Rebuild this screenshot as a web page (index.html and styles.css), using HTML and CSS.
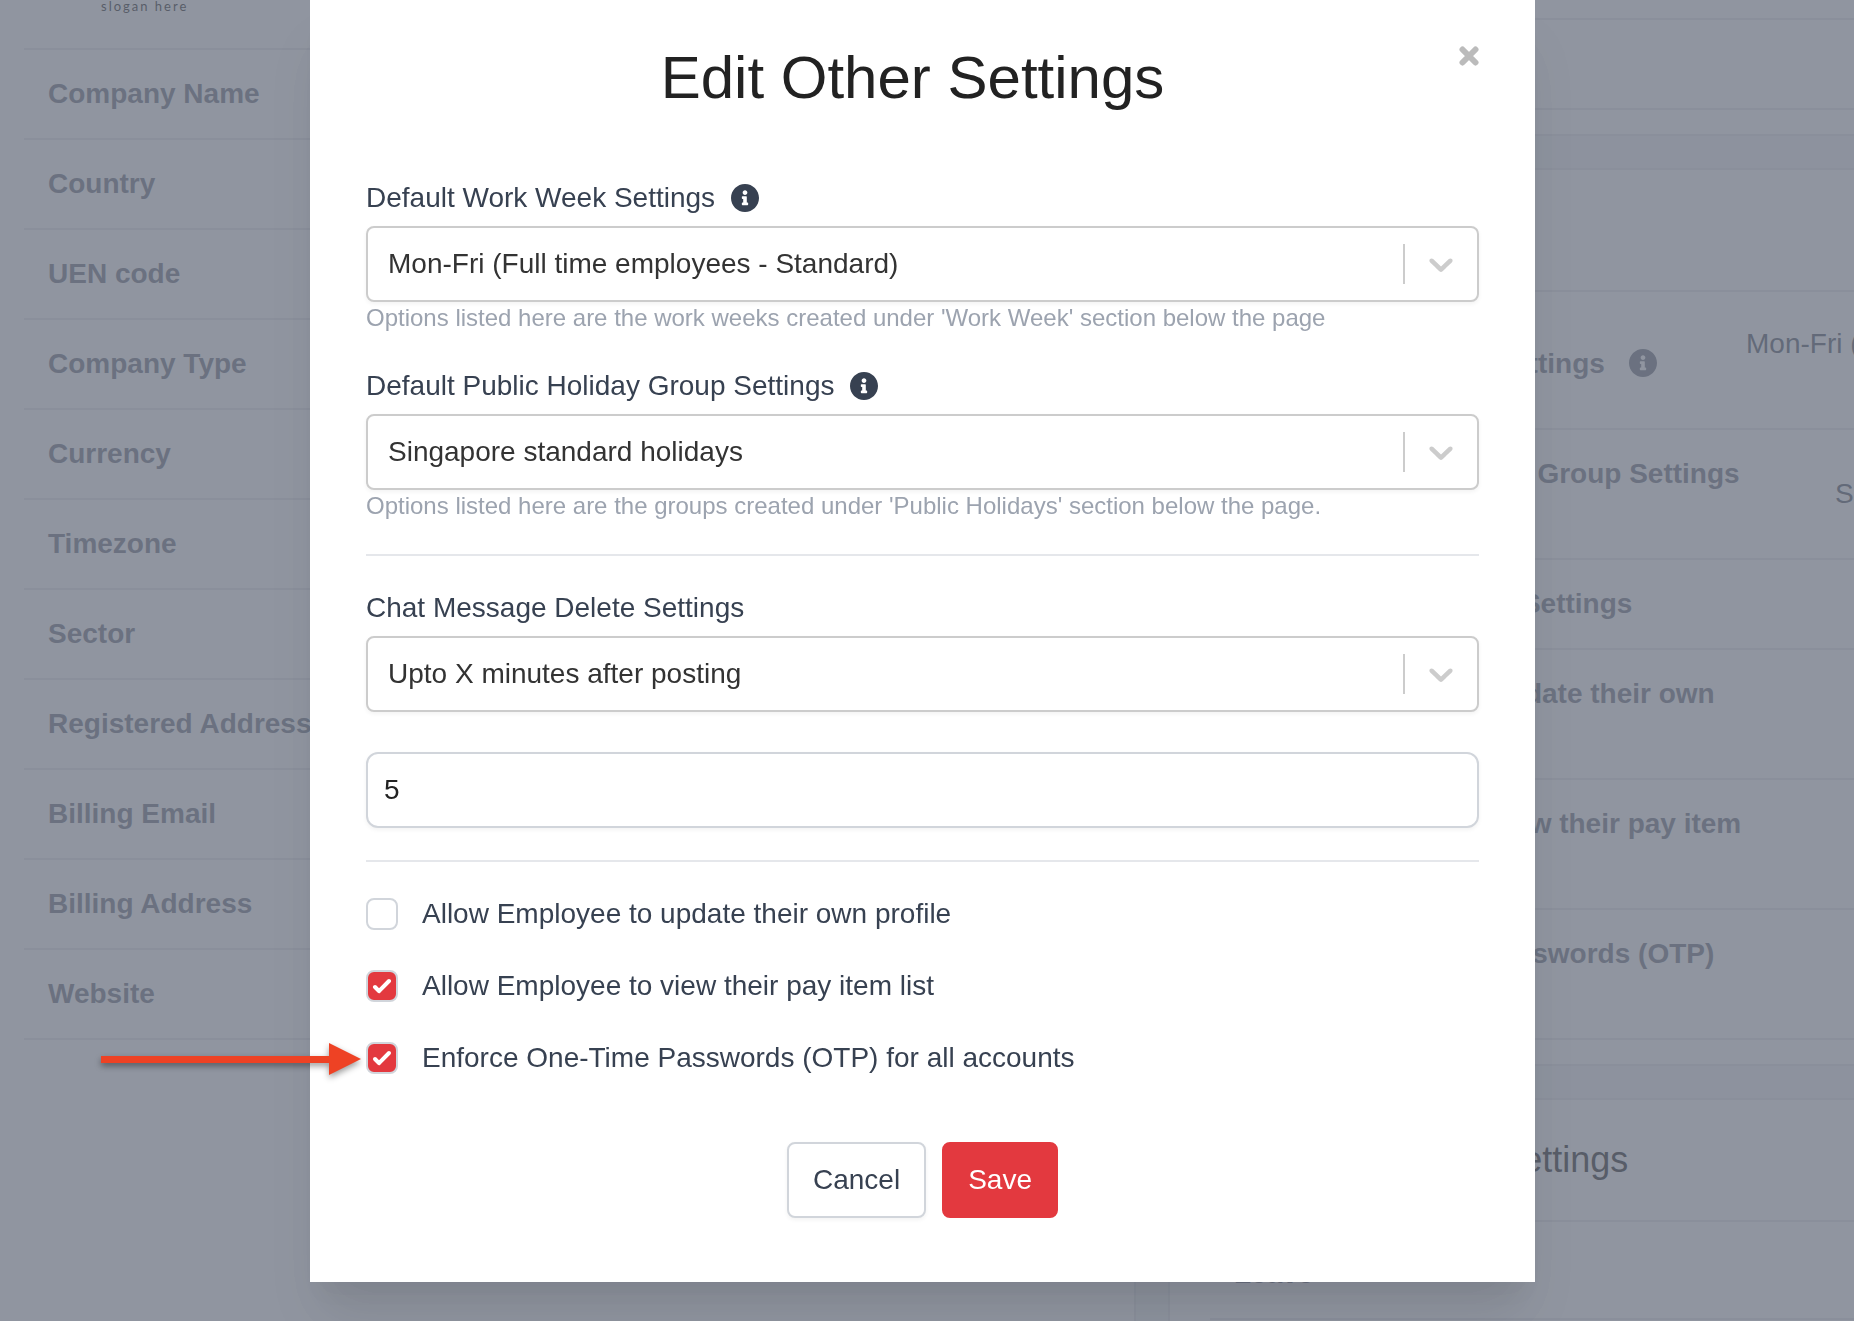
FILE: index.html
```html
<!DOCTYPE html>
<html lang="en">
<head>
    <meta charset="UTF-8">
    <meta name="viewport" content="width=device-width, initial-scale=1.0">
    <title>Edit Other Settings</title>
    <link rel="stylesheet" href="styles.css">
</head>
<body>

<!-- Shared icons -->
<svg class="sprite" aria-hidden="true">
    <symbol id="icon-info" viewBox="8 8 496 496">
        <path d="M256 8C119.043 8 8 119.083 8 256c0 136.997 111.043 248 248 248s248-111.003 248-248C504 119.083 392.957 8 256 8zm0 110c23.196 0 42 18.804 42 42s-18.804 42-42 42-42-18.804-42-42 18.804-42 42-42zm56 254c0 6.627-5.373 12-12 12h-88c-6.627 0-12-5.373-12-12v-24c0-6.627 5.373-12 12-12h12v-64h-12c-6.627 0-12-5.373-12-12v-24c0-6.627 5.373-12 12-12h64c6.627 0 12 5.373 12 12v100h12c6.627 0 12 5.373 12 12v24z"/>
    </symbol>
    <symbol id="icon-chevron" viewBox="0 0 20 20">
        <path d="M4.516 7.548c0.436-0.446 1.043-0.481 1.576 0l3.908 3.747 3.908-3.747c0.533-0.481 1.141-0.446 1.574 0 0.436 0.445 0.408 1.197 0 1.615-0.406 0.418-4.695 4.502-4.695 4.502-0.217 0.223-0.502 0.335-0.787 0.335s-0.57-0.112-0.789-0.335c0 0-4.287-4.084-4.695-4.502s-0.436-1.17 0-1.615z"/>
    </symbol>
    <symbol id="icon-check" viewBox="0 0 32 32">
        <path d="M9 17L13 21.2L23 11"/>
    </symbol>
</svg>

<main class="page">
    <section class="card company">
        <div class="logo">slogan here</div>
        <dl class="list">
            <div class="row"><dt>Company Name</dt></div>
            <div class="row"><dt>Country</dt></div>
            <div class="row"><dt>UEN code</dt></div>
            <div class="row"><dt>Company Type</dt></div>
            <div class="row"><dt>Currency</dt></div>
            <div class="row"><dt>Timezone</dt></div>
            <div class="row"><dt>Sector</dt></div>
            <div class="row"><dt>Registered Address</dt></div>
            <div class="row"><dt>Billing Email</dt></div>
            <div class="row"><dt>Billing Address</dt></div>
            <div class="row"><dt>Website</dt></div>
        </dl>
    </section>

    <div class="column">
        <section class="card">
            <div class="list">
                <div class="row row-cut"></div>
                <div class="row"></div>
            </div>
        </section>

        <section class="card">
            <h2 class="card-title">Other Settings</h2>
            <dl class="list list-spaced">
                <div class="row row-tall">
                    <dt>Default Work Week Settings <svg class="info"><use href="#icon-info"/></svg></dt>
                    <dd class="value-top">Mon-Fri (Full time employees - Standard)</dd>
                </div>
                <div class="row">
                    <dt>Default Public Holiday Group Settings <svg class="info"><use href="#icon-info"/></svg></dt>
                    <dd>Singapore standard holidays</dd>
                </div>
                <div class="row"><dt>Chat Message Delete Settings</dt></div>
                <div class="row"><dt>Allow Employee to update their own profile</dt></div>
                <div class="row"><dt>Allow Employee to view their pay item list</dt></div>
                <div class="row"><dt>Enforce One-Time Passwords (OTP) for all accounts</dt></div>
            </dl>
        </section>

        <section class="card">
            <h2 class="card-title">Leave Approval Settings</h2>
            <dl class="list list-spaced">
                <div class="row"><dt>Leave</dt></div>
            </dl>
        </section>
    </div>
</main>

<div class="overlay">
    <form class="modal" role="dialog" aria-labelledby="modalTitle">
        <div class="modal-header">
            <h1 id="modalTitle">Edit Other Settings</h1>
            <button type="button" class="close" aria-label="Close">
                <svg viewBox="0 0 20 20"><path d="M3.5 3.5L16.5 16.5M16.5 3.5L3.5 16.5"/></svg>
            </button>
        </div>

        <div class="fields">
            <div class="field">
                <label for="workWeek">Default Work Week Settings <svg class="info"><use href="#icon-info"/></svg></label>
                <div class="select">
                    <select id="workWeek">
                        <option>Mon-Fri (Full time employees - Standard)</option>
                    </select>
                    <span class="indicator"><svg><use href="#icon-chevron"/></svg></span>
                </div>
                <p class="help">Options listed here are the work weeks created under 'Work Week' section below the page</p>
            </div>

            <div class="field">
                <label for="holidayGroup">Default Public Holiday Group Settings <svg class="info"><use href="#icon-info"/></svg></label>
                <div class="select">
                    <select id="holidayGroup">
                        <option>Singapore standard holidays</option>
                    </select>
                    <span class="indicator"><svg><use href="#icon-chevron"/></svg></span>
                </div>
                <p class="help">Options listed here are the groups created under 'Public Holidays' section below the page.</p>
            </div>

            <hr>

            <div class="field">
                <label for="chatDelete">Chat Message Delete Settings</label>
                <div class="select">
                    <select id="chatDelete">
                        <option>Upto X minutes after posting</option>
                    </select>
                    <span class="indicator"><svg><use href="#icon-chevron"/></svg></span>
                </div>
                <input type="text" class="minutes" value="5" aria-label="Minutes after posting">
            </div>

            <hr>

            <label class="option">
                <span class="checkbox">
                    <input type="checkbox">
                    <svg><use href="#icon-check"/></svg>
                </span>
                Allow Employee to update their own profile
            </label>
            <label class="option">
                <span class="checkbox">
                    <input type="checkbox" checked>
                    <svg><use href="#icon-check"/></svg>
                </span>
                Allow Employee to view their pay item list
            </label>
            <label class="option">
                <span class="checkbox">
                    <input type="checkbox" checked>
                    <svg><use href="#icon-check"/></svg>
                </span>
                Enforce One-Time Passwords (OTP) for all accounts
                <!-- Pointer to the OTP setting -->
                <svg class="arrow" viewBox="0 0 260 32"><path d="M0 13H228V0L260 16L228 32V20H0Z"/></svg>
            </label>
        </div>

        <div class="actions">
            <button type="button" class="btn">Cancel</button>
            <button type="submit" class="btn btn-primary">Save</button>
        </div>
    </form>
</div>

</body>
</html>
```
FILE: styles.css
```css
* {
    box-sizing: border-box;
}

body {
    margin: 0;
    height: 100vh;
    overflow: hidden;
    background-color: #f3f4f6;
    color: #374151;
    font-family: "Liberation Sans", Arial, sans-serif;
    font-size: 28px;
    line-height: 40px;
}

h1, h2, p, dl, dd {
    margin: 0;
}

.sprite {
    display: none;
}

.info {
    width: 28px;
    height: 28px;
    fill: currentColor;
}

/* Settings page behind the dialog */
.page {
    display: grid;
    grid-template-columns: minmax(1136px, 1fr) 1088px;
    gap: 32px;
    height: 100vh;
    overflow: hidden;
}

.column {
    display: flex;
    flex-direction: column;
    gap: 32px;
}

.card {
    background-color: white;
    border: 2px solid #e5e7eb;
    padding-bottom: 24px;
}

.column .card:first-child {
    border-top: none;
}

.company {
    border-top: none;
    border-left: none;
}

.company .list {
    margin-left: 24px;
}

.logo {
    height: 50px;
    margin-left: 24px;
    padding-left: 77px;
    border-bottom: 2px solid #e5e7eb;
    color: #222;
    font-family: Lato, sans-serif;
    font-size: 13px;
    letter-spacing: 2px;
    line-height: 12px;
}

.card-title {
    padding: 40px 70px;
    border-bottom: 2px solid #e5e7eb;
    color: #222;
    font-size: 36px;
    font-weight: normal;
}

.list {
    margin: 0 40px;
}

.list-spaced {
    padding-top: 8px;
}

.row {
    display: grid;
    grid-template-columns: 512px 1fr;
    align-items: center;
    min-height: 90px;
    padding: 24px;
    border-bottom: 2px solid #e5e7eb;
}

.row-cut {
    min-height: 20px;
    padding: 0;
}

.row-tall {
    min-height: 130px;
}

dt {
    color: #6b7280;
    font-weight: bold;
}

dt .info {
    margin-left: 16px;
    vertical-align: -4px;
    display: inline-block;
}

dd {
    color: #4b5563;
    text-align: right;
    white-space: nowrap;
}

.value-top {
    align-self: start;
    text-align: left;
}

/* Dialog */
.overlay {
    position: fixed;
    inset: 0;
    padding: 0 319px 0 310px;
    background-color: rgba(107, 114, 128, 0.75);
}

.modal {
    padding: 40px 56px 64px;
    background-color: white;
    box-shadow: 0 40px 50px -10px rgba(0, 0, 0, 0.1), 0 20px 20px -10px rgba(0, 0, 0, 0.04);
}

.modal-header {
    display: flex;
    align-items: flex-start;
    margin-bottom: 62px;
}

.modal-header h1 {
    flex: 1;
    color: #222;
    font-size: 60px;
    font-weight: normal;
    line-height: 76px;
    text-align: center;
}

.close {
    display: flex;
    align-items: center;
    width: 20px;
    height: 32px;
    padding: 0;
    border: none;
    background: none;
    cursor: pointer;
}

.close svg {
    width: 20px;
    height: 20px;
    stroke: #bbb;
    stroke-width: 6;
    stroke-linecap: round;
}

.fields {
    display: flex;
    flex-direction: column;
    gap: 32px;
}

.field label {
    display: flex;
    align-items: center;
    gap: 16px;
    margin-bottom: 8px;
}

.select {
    display: grid;
    align-items: center;
}

.select select,
.indicator {
    grid-area: 1 / 1;
}

select,
.minutes {
    width: 100%;
    height: 76px;
    background-color: white;
    font: inherit;
    box-shadow: 0 2px 4px rgba(0, 0, 0, 0.05);
}

select {
    appearance: none;
    padding: 0 90px 0 20px;
    border: 2px solid #ccc;
    border-radius: 8px;
    color: #333;
}

.indicator {
    justify-self: end;
    display: flex;
    align-items: center;
    height: 40px;
    margin-right: 2px;
    padding: 0 16px;
    border-left: 2px solid #ccc;
    pointer-events: none;
}

.indicator svg {
    width: 40px;
    height: 40px;
    fill: #ccc;
}

.minutes {
    margin-top: 40px;
    padding: 0 16px;
    border: 2px solid #d1d5db;
    border-radius: 12px;
    color: #222;
    display: block;
}

.help {
    color: #9ca3af;
    font-size: 24px;
    line-height: 32px;
}

hr {
    width: 100%;
    margin: 0;
    border: none;
    border-top: 2px solid #e5e7eb;
}

.option {
    position: relative;
    display: flex;
    align-items: center;
    gap: 24px;
}

.checkbox {
    display: grid;
}

.checkbox input,
.checkbox svg {
    grid-area: 1 / 1;
    width: 32px;
    height: 32px;
}

.checkbox input {
    appearance: none;
    margin: 0;
    border: 2px solid #d1d5db;
    border-radius: 8px;
    background-color: white;
}

.checkbox input:checked {
    background-color: #e3393f;
}

.checkbox svg {
    fill: none;
    stroke: white;
    stroke-width: 4;
    stroke-linecap: round;
    stroke-linejoin: round;
    pointer-events: none;
}

.arrow {
    position: absolute;
    right: 100%;
    top: 5px;
    width: 260px;
    height: 32px;
    margin-right: 5px;
    overflow: visible;
    fill: #ee4224;
    filter: drop-shadow(0 3px 3px rgba(0, 0, 0, 0.4));
}

.actions {
    display: flex;
    justify-content: center;
    gap: 16px;
    margin-top: 64px;
}

.btn {
    padding: 16px 24px;
    border: 2px solid #d1d5db;
    border-radius: 8px;
    background-color: white;
    color: #374151;
    font: inherit;
    box-shadow: 0 2px 4px rgba(0, 0, 0, 0.05);
    cursor: pointer;
}

.btn-primary {
    border-color: #e3393f;
    background-color: #e3393f;
    color: white;
    box-shadow: none;
}
```
